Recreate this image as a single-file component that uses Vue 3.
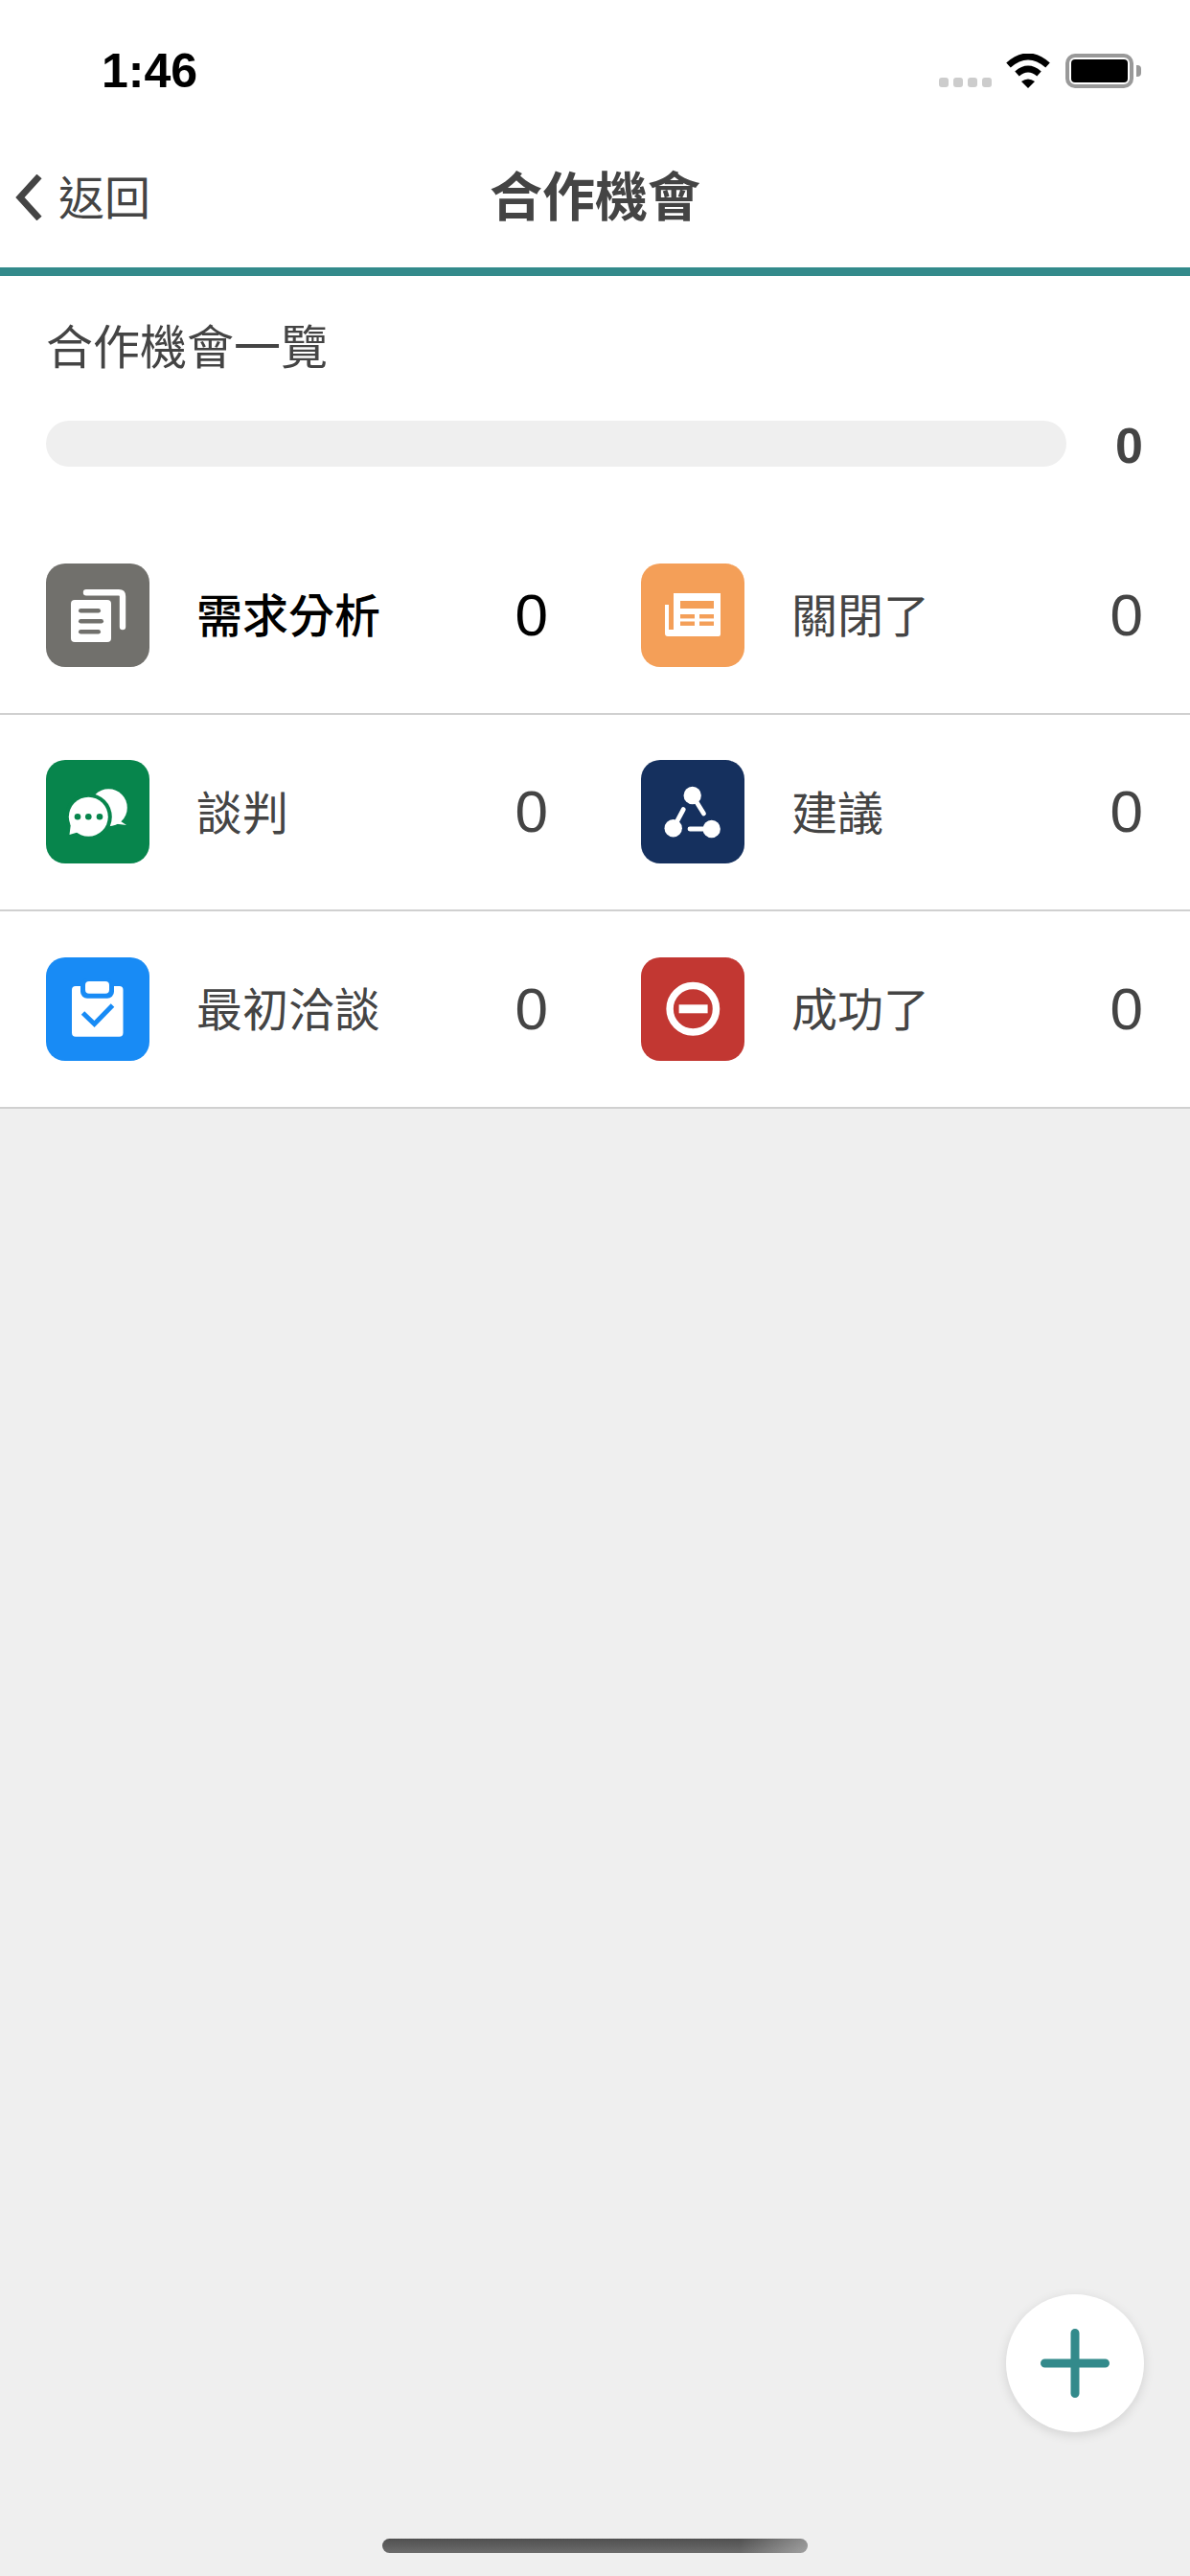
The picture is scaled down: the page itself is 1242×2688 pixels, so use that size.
<template>
  <div class="page">
    <div class="status-bar">
      <span class="time">1:46</span>
      <div class="status-icons">
        <div class="signal">
          <i v-for="n in 4" :key="n"></i>
        </div>
        <svg class="wifi" width="48" height="36" viewBox="0 0 48 36">
          <path d="M3.5 12Q24 -6 44.5 12" fill="none" stroke="#000" stroke-width="6.8" />
          <path d="M12.5 21Q24 11 35.5 21" fill="none" stroke="#000" stroke-width="6.8" />
          <path d="M17 29Q24 24 31 29L24 36Z" fill="#000" />
        </svg>
        <div class="battery">
          <div class="battery-level"></div>
          <div class="battery-tip"></div>
        </div>
      </div>
    </div>

    <div class="nav">
      <div class="back">
        <svg class="chevron" width="30" height="48" viewBox="0 0 30 48">
          <path d="M26 2L6 24L26 46" fill="none" stroke="#444" stroke-width="7" />
        </svg>
        <span>返回</span>
      </div>
      <h1>合作機會</h1>
    </div>
    <div class="accent"></div>

    <div class="summary">
      <div class="summary-title">合作機會一覽</div>
      <div class="summary-row">
        <div class="progress"></div>
        <span class="summary-count">0</span>
      </div>
    </div>

    <div class="list">
      <div v-for="item in items" :key="item.label" class="cell" :class="{ active: item.active }">
        <svg class="tile" width="108" height="108" viewBox="0 0 108 108" :style="{ background: item.color }">
          <template v-if="item.icon === 'docs'">
            <path d="M42 30.3H76Q80 30.3 80 34.3V66" fill="none" stroke="#fff" stroke-width="6.4" stroke-linecap="round" />
            <rect x="26" y="38" width="42" height="44" rx="4" fill="#fff" />
            <rect x="34" y="47" width="23" height="4.6" rx="2.3" :fill="item.color" />
            <rect x="34" y="58" width="26" height="4.6" rx="2.3" :fill="item.color" />
            <rect x="34" y="69" width="23" height="4.6" rx="2.3" :fill="item.color" />
          </template>
          <template v-else-if="item.icon === 'news'">
            <path d="M34 31H83V74Q83 76 81 76H28Q25 76 25 73V43H29V69H34Z" fill="#fff" />
            <rect x="41" y="39" width="35" height="8" :fill="item.color" />
            <rect x="41" y="53" width="15" height="4.4" :fill="item.color" />
            <rect x="61" y="53" width="15" height="4.4" :fill="item.color" />
            <rect x="41" y="60.5" width="15" height="4.4" :fill="item.color" />
            <rect x="61" y="60.5" width="15" height="4.4" :fill="item.color" />
          </template>
          <template v-else-if="item.icon === 'chat'">
            <circle cx="65.3" cy="49.7" r="19.5" fill="#fff" />
            <path d="M72 60L84 68L68 66Z" fill="#fff" />
            <circle cx="44.3" cy="59.3" r="24.5" :fill="item.color" />
            <circle cx="44.3" cy="59.3" r="20.5" fill="#fff" />
            <path d="M26 66L24.5 78L38 74Z" fill="#fff" />
            <circle cx="33" cy="59.3" r="3.3" :fill="item.color" />
            <circle cx="44.3" cy="59.3" r="3.3" :fill="item.color" />
            <circle cx="56" cy="59.3" r="3.3" :fill="item.color" />
          </template>
          <template v-else-if="item.icon === 'nodes'">
            <circle cx="53.7" cy="37" r="9.2" fill="#fff" />
            <circle cx="33.7" cy="71.3" r="9.2" fill="#fff" />
            <circle cx="73.7" cy="72" r="9.2" fill="#fff" />
            <path d="M53.7 37L65.5 56M33.7 71.3L44.3 51.5M73.7 72H51" fill="none" stroke="#fff" stroke-width="4.8" stroke-linecap="round" />
          </template>
          <template v-else-if="item.icon === 'clipboard'">
            <rect x="27" y="30" width="53.5" height="52.7" rx="4" fill="#fff" />
            <rect x="36" y="22" width="35" height="20.7" rx="7" :fill="item.color" />
            <rect x="41" y="25" width="25" height="12.7" rx="4" fill="#fff" />
            <path d="M38.5 58L50.5 69.5L69.5 50" fill="none" :stroke="item.color" stroke-width="5" />
          </template>
          <template v-else>
            <circle cx="54.3" cy="53.8" r="24.2" fill="none" stroke="#fff" stroke-width="7.5" />
            <rect x="39.6" y="49.3" width="30" height="9" fill="#fff" />
          </template>
        </svg>
        <span class="label">{{ item.label }}</span>
        <span class="count">{{ item.count }}</span>
      </div>
    </div>

    <button class="fab" type="button">
      <svg width="72" height="72" viewBox="0 0 72 72">
        <path d="M4.5 36H67.5M36 4.5V67.5" fill="none" stroke="#338a8b" stroke-width="9" stroke-linecap="round" />
      </svg>
    </button>
    <div class="home-bar"></div>
  </div>
</template>

<script setup>
const items = [
  { label: '需求分析', count: 0, color: '#71706c', icon: 'docs', active: true },
  { label: '關閉了', count: 0, color: '#f49f58', icon: 'news' },
  { label: '談判', count: 0, color: '#07854c', icon: 'chat' },
  { label: '建議', count: 0, color: '#15305e', icon: 'nodes' },
  { label: '最初洽談', count: 0, color: '#188bf5', icon: 'clipboard' },
  { label: '成功了', count: 0, color: '#c23732', icon: 'block' },
]
</script>

<style>
html,
body {
  margin: 0;
  background: #efefef;
}
</style>

<style scoped>
.page {
  position: relative;
  display: flex;
  flex-direction: column;
  width: 1242px;
  height: 2688px;
  overflow: hidden;
  background: #efefef;
  color: #444;
  font-family: "Liberation Sans", "Noto Sans CJK TC", sans-serif;
}

.status-bar {
  display: flex;
  justify-content: space-between;
  box-sizing: border-box;
  height: 130px;
  padding: 56px 59px 0 106px;
  background: #fff;
}
.time {
  color: #000;
  font-size: 50px;
  font-weight: 700;
  line-height: 36px;
}
.status-icons {
  display: flex;
  align-items: flex-start;
  height: 36px;
}
.signal {
  display: flex;
  gap: 5px;
  margin-top: 25px;
  margin-right: 14px;
}
.signal i {
  width: 10px;
  height: 10px;
  border-radius: 3px;
  background: #ccc;
}
.wifi {
  margin-right: 15px;
}
.battery {
  position: relative;
  box-sizing: border-box;
  width: 71px;
  height: 36px;
  padding: 2px;
  border: 4px solid #999;
  border-radius: 10px;
}
.battery-level {
  height: 100%;
  border-radius: 4px;
  background: #000;
}
.battery-tip {
  position: absolute;
  top: 8px;
  right: -12px;
  width: 5px;
  height: 12px;
  border-radius: 0 4px 4px 0;
  background: #999;
}

.nav {
  position: relative;
  display: flex;
  align-items: center;
  justify-content: center;
  box-sizing: border-box;
  height: 149px;
  padding-bottom: 7px;
  background: #fff;
}
.back {
  position: absolute;
  top: 0;
  bottom: 3px;
  left: 15px;
  display: flex;
  align-items: center;
  gap: 16px;
  font-size: 48px;
}
.chevron {
  margin-top: 6px;
}
.nav h1 {
  margin: 0;
  font-size: 55px;
  font-weight: 700;
}
.accent {
  height: 9px;
  background: #338a8b;
}

.summary {
  box-sizing: border-box;
  height: 252px;
  padding: 51px 48px 0;
  background: #fff;
}
.summary-title {
  font-size: 49px;
  line-height: 48px;
}
.summary-row {
  display: flex;
  align-items: center;
  justify-content: space-between;
  margin-top: 50px;
}
.progress {
  width: 1065px;
  height: 48px;
  border-radius: 24px;
  background: #efefef;
}
.summary-count {
  margin-right: 1px;
  padding-top: 4px;
  font-size: 52px;
  font-weight: 700;
  line-height: 48px;
}

.list {
  display: grid;
  grid-template-columns: repeat(2, 1fr);
  background: #fff;
}
.cell {
  display: flex;
  align-items: center;
  box-sizing: border-box;
  height: 205.5px;
  padding: 0 48px;
  border-bottom: 2px solid #d0d0d0;
}
.tile {
  flex: none;
  border-radius: 20px;
}
.label {
  flex: 1;
  margin-bottom: 5px;
  margin-left: 49px;
  font-size: 48px;
}
.count {
  margin-right: 1px;
  font-size: 62px;
  line-height: 1;
}
.active .label {
  color: #000;
  font-weight: 500;
}
.active .count {
  color: #000;
}

.fab {
  position: absolute;
  top: 2394px;
  left: 1050px;
  display: flex;
  align-items: center;
  justify-content: center;
  width: 144px;
  height: 144px;
  padding: 0;
  border: 0;
  border-radius: 50%;
  background: #fff;
  box-shadow: 0 3px 12px rgba(0, 0, 0, 0.12);
}
.home-bar {
  position: absolute;
  top: 2649px;
  left: 399px;
  width: 444px;
  height: 15px;
  border-radius: 8px;
  background: linear-gradient(90deg, transparent 84%, rgba(239, 239, 239, 0.4)), linear-gradient(180deg, #505050, #6c6c6c);
}
</style>
